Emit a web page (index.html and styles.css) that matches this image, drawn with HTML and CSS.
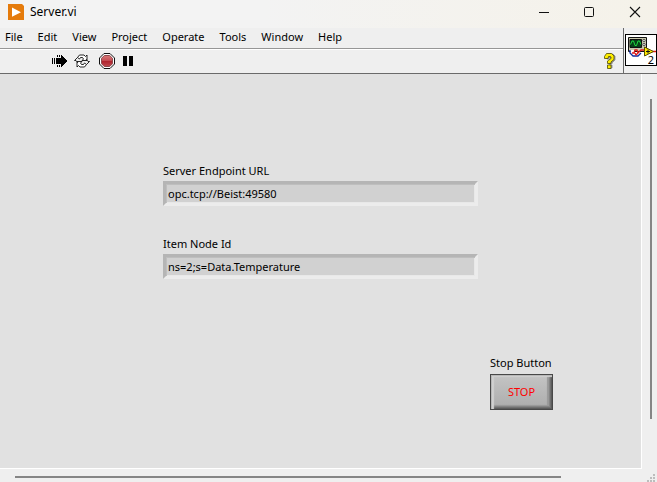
FILE: index.html
```
<!DOCTYPE html>
<html lang="en">
<head>
<meta charset="utf-8">
<title>Server.vi</title>
<link rel="stylesheet" href="styles.css">
</head>
<body>
<div class="window">
  <header class="titlebar">
    <svg class="app-icon" width="16" height="16" viewBox="0 0 16 16" aria-hidden="true"><path d="M0 0h14l2 2v14H0z" fill="#e57b0c"/><path d="M4 3.500v9.300l9-4.600z" fill="#fff"/></svg>
    <h1 class="title">Server.vi</h1>
    <div class="controls">
      <button class="control" aria-label="Minimize"><svg width="12" height="12" viewBox="0 0 12 12"><path d="M0 6.500h10" stroke="#111"/></svg></button>
      <button class="control" aria-label="Maximize"><svg width="12" height="12" viewBox="0 0 12 12"><rect x=".5" y="1.500" width="9" height="9" rx="1" fill="none" stroke="#111"/></svg></button>
      <button class="control" aria-label="Close"><svg width="12" height="12" viewBox="0 0 12 12"><path d="M1 1l10 10M11 1L1 11" stroke="#111" stroke-width="1.100"/></svg></button>
    </div>
  </header>
  <div class="bars">
    <div class="bar-stack">
      <nav class="menu">
        <button>File</button><button>Edit</button><button>View</button><button>Project</button><button>Operate</button><button>Tools</button><button>Window</button><button>Help</button>
      </nav>
      <div class="toolbar">
        <button class="tool" aria-label="Run"><svg width="16" height="14" viewBox="0 0 16 14" shape-rendering="crispEdges"><path d="M5 4h4V1h1v1h1v1h1v1h1v1h1v1h1v2h-1v1h-1v1h-1v1h-1v1h-1v1H9v-3H5zM0 4h1v6H0zM2 4h1v6H2zM4 4h1v6H4zM5 1h1v2H5zM7 1h1v2H7zM5 11h1v2H5zM7 11h1v2H7z"/></svg></button>
        <button class="tool" aria-label="Run Continuously"><svg width="16" height="14" viewBox="0 0 16 14" fill="#fff" stroke="#111" stroke-width=".9"><path d="M3.500 3.500l2-2.500h4.500l1.500 1.500L13 1v5.500H8L9.500 5 8.500 3.500h-2L5.500 5z"/><path d="M12.500 10.500l-2 2.500H6l-1.500-1.500L3 13V7.500h5L6.500 9l1 1.500h2l1-1.500z"/><path d="M3.500 3.500L.5 6.500H2L4 9M12.500 10.500l3-3H14L12 5" fill="none"/></svg></button>
        <button class="tool stop-tool" aria-label="Abort Execution"><svg width="16" height="16" viewBox="0 0 16 16"><defs><linearGradient id="red" x2="0" y2="1"><stop stop-color="#d87878"/><stop offset=".45" stop-color="#c65056"/><stop offset=".5" stop-color="#b0222c"/><stop offset="1" stop-color="#bd4a50"/></linearGradient></defs><path d="M5 .5h6L15.500 5v6L11 15.500H5L.5 11V5z" fill="#fff" stroke="#111"/><path d="M5.300 2.500h5.400l2.800 2.800v5.400l-2.800 2.800H5.300l-2.800-2.800V5.300z" fill="url(#red)" stroke="#8e4a4e"/></svg></button>
        <button class="tool pause-tool" aria-label="Pause"><svg width="10" height="10" viewBox="0 0 10 10"><path d="M0 0h4v10H0zM6 0h4v10H6z"/></svg></button>
        <button class="tool help" aria-label="Context Help"><svg width="12" height="16" viewBox="0 0 12 16"><path d="M2 5V3l2-2h5l2 2v4L8 10v1H5V9l3-3V5H5v1H3zM5 12h3v3H5z" fill="#999" stroke="#999"/><path d="M.5 5.500v-2l2-3h5l2.500 2.500v3.500L7 9v1.500H3.500V8L7 5.500V4L6 3.500H4.500L4 5.500zM3.500 12H7v3.500H3.500z" fill="#ffee00" stroke="#4f4a00" stroke-width=".8"/></svg></button>
      </div>
    </div>
    <div class="vi-cell">
      <button class="vi-icon" aria-label="VI icon 2">
        <svg width="30" height="30" viewBox="0 0 30 30">
          <path d="M2.500 2.500h18v14h-18z" fill="#c8c8ac" stroke="#111"/><path d="M4 4.500h11.500v8H4z" fill="#064016" stroke="#111"/>
          <path d="M4.500 9.500L6 6h1.500L9 10.500h1.500L12 6h1.500l1.500 3.500" fill="none" stroke="#20d840"/>
          <circle cx="18" cy="5.500" r="1.200" fill="#eee" stroke="#333" stroke-width=".8"/><circle cx="18" cy="9.500" r="1.200" fill="#eee" stroke="#333" stroke-width=".8"/>
          <path d="M4 15h4v3H6l-2-2" fill="#fff"/><path d="M4 15v3l3 3h5l3-3" fill="none" stroke="#102ca0" stroke-width="1.300"/>
          <path d="M6 18h2l1-3h2l1 3-2 2-1-2M12 18l3-3h4M26 16.500h4" fill="none" stroke="#e01818" stroke-width="1.300"/>
          <path d="M18.500 12l9 4.500-9 4.500z" fill="#ffe800" stroke="#5b5200"/><path d="M20 16.500h4M22 14.500v4" stroke="#111"/>
        </svg>
        <span class="vi-number">2</span>
      </button>
    </div>
  </div>
  <div class="work">
    <main class="panel">
      <div class="field"><label for="url">Server Endpoint URL</label><input id="url" type="text" value="opc.tcp://Beist:49580"></div>
      <div class="field"><label for="node">Item Node Id</label><input id="node" type="text" value="ns=2;s=Data.Temperature"></div>
      <div class="stop"><label for="stop">Stop Button</label><button id="stop" class="stop-button">STOP</button></div>
    </main>
    <div class="scroll-y"><div class="thumb"></div></div>
    <div class="scroll-x"><div class="thumb"></div></div>
    <div class="grip"><svg width="8" height="8" viewBox="0 0 8 8" fill="#bdbdbd"><path d="M6 0h2v2H6zM3 3h2v2H3zM6 3h2v2H6zM0 6h2v2H0zM3 6h2v2H3zM6 6h2v2H6z"/></svg></div>
  </div>
</div>
</body>
</html>
```
FILE: styles.css
```
* { box-sizing: border-box; }
body { margin: 0; }
body, button, input { font: 11px/18px "Noto Sans", "Open Sans", sans-serif; color: #000; }
button { padding: 0; border: 0; background: none; }
svg { display: block; }

.window { min-height: 100vh; display: flex; flex-direction: column; background: #efefef; }

.titlebar { display: flex; align-items: center; height: 28px; padding: 0 0 4px 8px; background: linear-gradient(90deg, #f3f3f3 40%, #f5f2e9); }
.title { margin: 0 0 0 6px; font-size: 12px; font-weight: 400; }
.controls { display: flex; margin-left: auto; }
.control { width: 45px; height: 24px; display: grid; place-items: center; }

.bars { display: flex; height: 46px; border-bottom: 1px solid #6a6a6a; }
.bar-stack { flex: 1; display: flex; flex-direction: column; }
.menu { display: flex; align-items: flex-start; gap: 15px; height: 21px; padding-left: 5px; border-bottom: 1px solid #969696; }
.toolbar { flex: 1; display: flex; align-items: center; gap: 6px; padding: 0 7px 1px 52px; border-top: 1px solid #fff; }
.stop-tool { margin-left: 3px; }
.pause-tool { margin-left: 2px; }
.help { margin-left: auto; }
.vi-cell { width: 34px; padding-top: 6px; border-left: 1px solid #6a6a6a; }
.vi-icon { position: relative; display: block; width: 32px; height: 32px; margin-left: 1px; border: 1px solid #000; background: #fff; }
.vi-number { position: absolute; right: 2px; bottom: 0; line-height: 11px; }

.work { flex: 1; display: grid; grid-template: 1fr 13px / 1fr 15px; }
.panel { padding: 88px 24px 0 163px; background: #e1e1e1; border: solid #fff; border-width: 0 1px 1px 0; }
.field { display: flex; flex-direction: column; gap: 1px; max-width: 315px; margin-bottom: 29px; }
.field input { height: 25px; padding: 0 2px; border: 3px solid; border-color: #b5b5b5 #ececec #ececec #b5b5b5; background: #d1d1d1; outline: 0; box-shadow: inset 1px 1px #bebebe, inset -1px -1px #e8e8e8; }
.stop { display: flex; flex-direction: column; gap: 2px; width: max-content; margin: 75px 0 0 327px; }
.stop-button { width: 63px; height: 36px; border: 1px solid #484848; color: #f00; background: linear-gradient(#c4c4c4, #acacac); box-shadow: inset 1px 1px #b8b8b8, inset 3px 2px 1px #d0d0d0, inset -1px -1px #5c5c5c, inset -2px -2px #707070, inset -3px -3px #848484, inset -5px -4px 1px #989898; }

.scroll-y { padding: 25px 5px 50px 8px; }
.scroll-y .thumb { width: 2px; height: 100%; background: #858585; }
.scroll-x { padding: 7px 81px 0 15px; }
.scroll-x .thumb { height: 2px; background: #858585; }
.grip { display: flex; align-items: flex-end; justify-content: flex-end; padding-right: 2px; }
```
